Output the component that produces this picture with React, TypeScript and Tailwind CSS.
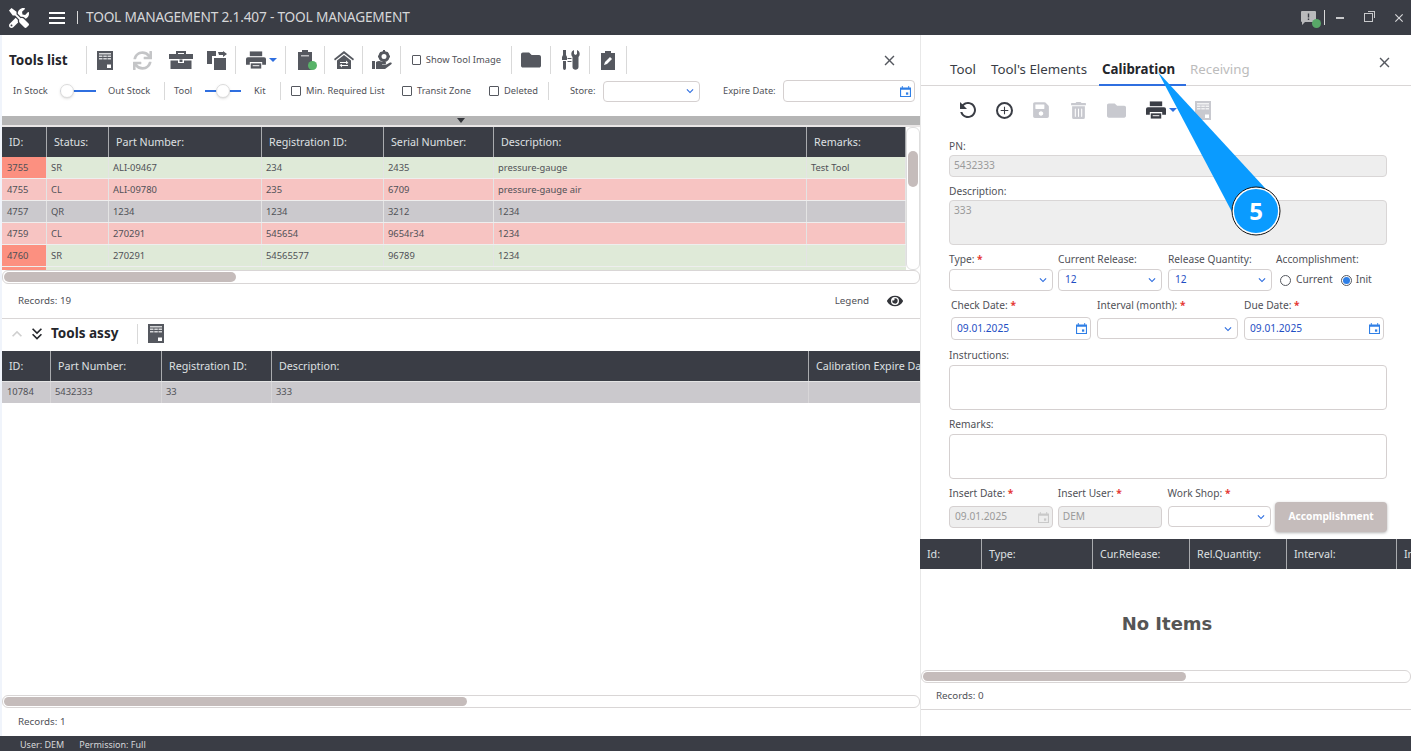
import React from 'react';
import { FaFolder, FaSave, FaSync, FaTools, FaTrashAlt, FaEye } from 'react-icons/fa';
import { MdAdd, MdClose, MdExpandMore, MdKeyboardArrowUp, MdKeyboardDoubleArrowDown, MdRefresh } from 'react-icons/md';

const Sep = ({ className = 'h-[28px]' }: { className?: string }) => <div className={`w-px bg-[#d9d9d9] shrink-0 ${className}`} />;

const ExcelIcon = ({ className = 'text-[#55585f]' }: { className?: string }) => (
    <svg viewBox="0 0 16 19" className={`w-[16px] h-[19px] ${className}`}>
        <rect width="16" height="19" fill="currentColor" />
        <path d="M2 2h12v1.500H2zM2 4.500h3.500V6H2zM6.300 4.500h3.500V6H6.300zM10.500 4.500H14V6h-3.500zM2 7h3.500v1.500H2zM6.300 7h3.500v1.500H6.300zM10.500 7H14v1.500h-3.500z" fill="#fff" opacity="0.75" />
        <path d="M10 13.500h4V17h-4z" fill="#fff" />
    </svg>
);

const Caret = () => <div className="w-0 h-0 border-x-[4px] border-x-transparent border-t-[4px] border-t-[#2f6fe0]" />;

const ToolboxIcon = () => (
    <svg viewBox="0 0 24 18" className="w-[24px] h-[18px] text-[#55585f]">
        <path d="M7 0h10v3h-2V2H9v1H7z" fill="currentColor" />
        <path d="M0 3h24v5H0zM1.500 9.500H9V12h6V9.500h7.500V18h-21z" fill="currentColor" />
        <rect x="10.500" y="8.500" width="3" height="2.500" fill="currentColor" />
    </svg>
);

const PrinterIcon = ({ className = 'text-[#55585f]' }: { className?: string }) => (
    <svg viewBox="0 0 21 18" className={`w-[20px] h-[18px] ${className}`}>
        <path d="M4 0h13v5H4z" fill="currentColor" />
        <path d="M2 6h17a2 2 0 0 1 2 2v6h-4v-3H4v3H0V8a2 2 0 0 1 2-2z" fill="currentColor" />
        <path d="M5 12.500h11V18H5z" fill="currentColor" />
        <path d="M7 14.500h7v1H7z" fill="#fff" />
    </svg>
);

const CopyIcon = () => (
    <svg viewBox="0 0 20 19" className="w-[20px] h-[19px] text-[#55585f]">
        <path d="M0 0h9v5H5v8H0z" fill="currentColor" />
        <path d="M7 7h12v12H7z" fill="currentColor" />
        <path d="M11 1h5V0l4 3-4 3V4h-4z" fill="currentColor" />
    </svg>
);

const ClipboardBadge = () => (
    <div className="relative w-[20px] h-[20px]">
        <svg viewBox="0 0 16 20" className="w-[16px] h-[20px] text-[#55585f]">
            <path d="M5 0h6v2h4v18H1V2h4z" fill="currentColor" />
            <path d="M4 5h8v1.500H4z" fill="#fff" opacity="0.6" />
        </svg>
        <div className="absolute right-0 bottom-0 w-[9px] h-[9px] rounded-full bg-[#58b368]" />
    </div>
);

const HomeIcon = () => (
    <svg viewBox="0 0 20 18" className="w-[20px] h-[18px] text-[#55585f]">
        <path d="M10 0 20 8l-1 1.500L10 2.500 1 9.500 0 8z" fill="currentColor" />
        <path d="M10 4l7 5.500V18H3V9.500z" fill="currentColor" />
        <path d="M6 11h6V9.500l2.500 2.500L12 13v-1H6zM14 15H8v1.500L5.500 14 8 13v1h6z" fill="#fff" />
    </svg>
);

const HandGearIcon = () => (
    <svg viewBox="0 0 20 20" className="w-[20px] h-[20px] text-[#55585f]">
        <circle cx="12" cy="6.500" r="4" fill="none" stroke="currentColor" strokeWidth="3" />
        <path d="M12 0v2M12 11v2M6 6.500h2M16 6.500h2M8 2.500l1.500 1.500M16 2.500 14.500 4" stroke="currentColor" strokeWidth="2" />
        <path d="M0 11h3v8H0zM4 12c2-1.500 4-1.500 6 0h3c1.500 0 1.500 2 0 2h-3v.5l4.500 0 3.500-2c1.500-.5 2.500 1 1 2L13 19H4z" fill="currentColor" />
    </svg>
);

const ToolSwapIcon = () => (
    <svg viewBox="0 0 20 20" className="w-[20px] h-[20px] text-[#55585f]">
        <path d="M2 0h3v5l1 2v3H1V7l1-2zM2 11h3v7c0 2.500-3 2.500-3 0z" fill="currentColor" />
        <path d="M13 0v4l1.500 1L16 4V0c3 1 3.500 5 1.500 7v10c0 3.500-6 3.500-6 0V7C9.500 5 10 1 13 0z" fill="currentColor" />
        <path d="M6.500 8.500h4M6.500 11.500h4" stroke="currentColor" strokeWidth="1" />
    </svg>
);

const ClipPenIcon = () => (
    <svg viewBox="0 0 14 19" className="w-[14px] h-[19px] text-[#55585f]">
        <path d="M4 0h6v2h4v17H0V2h4z" fill="currentColor" />
        <path d="M3 14l1-3 5-5 2 2-5 5z" fill="#fff" />
    </svg>
);

const BubbleIcon = () => (
    <svg viewBox="0 0 15 14" className="w-[15px] h-[14px]">
        <path d="M1 0h13a1 1 0 0 1 1 1v9a1 1 0 0 1-1 1H4l-3 3v-3a1 1 0 0 1-1-1V1a1 1 0 0 1 1-1z" fill="#b9babc" />
        <path d="M6.800 2.500h1.400v4H6.800zM6.800 7.500h1.400v1.500H6.800z" fill="#3a3d45" />
    </svg>
);

const CalendarIcon = ({ className = 'text-[#2f7fe6]' }: { className?: string }) => (
    <svg viewBox="0 0 12 12" className={`w-[11px] h-[11px] ${className}`}>
        <path d="M0 1.500h2V0h1v1.500h6V0h1v1.500h2V12H0zM1.200 4v6.800h9.600V4z" fill="currentColor" />
        <rect x="6.500" y="7" width="2.500" height="2.500" fill="currentColor" />
    </svg>
);

const Toggle = ({ knobClass }: { knobClass: string }) => (
    <div className="relative w-[36px] h-[14px] flex items-center">
        <div className="h-[2px] bg-[#2f6fe0] w-full" />
        <div className={`absolute top-0 w-[14px] h-[14px] rounded-full bg-white border border-[#dcdcdc] shadow-sm ${knobClass}`} />
    </div>
);

const Check = ({ label, className }: { label: string; className: string }) => (
    <div className={`flex items-center gap-[5px] ${className}`}>
        <div className="w-[10px] h-[10px] border border-[#55585f] rounded-[1px]" />
        <span>{label}</span>
    </div>
);

const Chevron = () => <MdExpandMore className="text-[#2f6fe0] text-[14px] shrink-0" />;

const Req = () => <span className="text-[#e53935] font-bold"> *</span>;

const Field = ({ label, req, className, children }: { label: string; req?: boolean; className: string; children: React.ReactNode }) => (
    <div className={`flex flex-col ${className}`}>
        <div className="h-[14px] leading-[14px] whitespace-nowrap">{label}{req && <Req />}</div>
        {children}
    </div>
);

const SelectBox = ({ value, className = 'h-[22px]' }: { value?: string; className?: string }) => (
    <div className={`flex items-center justify-between pl-[6px] pr-[2px] border border-[#d5d0d0] rounded-[4px] bg-white text-[#1f4fc4] ${className}`}>
        <span>{value}</span>
        <Chevron />
    </div>
);

const DateBox = ({ value }: { value: string }) => (
    <div className="flex items-center justify-between h-[23px] pl-[5px] pr-[3px] border border-[#d5d0d0] rounded-[4px] bg-white text-[#1f4fc4]">
        <span>{value}</span>
        <CalendarIcon />
    </div>
);

const toolCols = ['w-[45px]', 'w-[62px]', 'w-[153px]', 'w-[122px]', 'w-[110px]', 'w-[313px]', 'w-[99px]'];
const toolHeaders = ['ID:', 'Status:', 'Part Number:', 'Registration ID:', 'Serial Number:', 'Description:', 'Remarks:'];
const toolRows = [
    { bg: 'bg-[#dfead8]', idBg: 'bg-[#fc9080]', cells: ['3755', 'SR', 'ALI-09467', '234', '2435', 'pressure-gauge', 'Test Tool'] },
    { bg: 'bg-[#f7c4c2]', idBg: 'bg-[#f7c4c2]', cells: ['4755', 'CL', 'ALI-09780', '235', '6709', 'pressure-gauge air', ''] },
    { bg: 'bg-[#cbc9cd]', idBg: 'bg-[#cbc9cd]', cells: ['4757', 'QR', '1234', '1234', '3212', '1234', ''] },
    { bg: 'bg-[#f7c4c2]', idBg: 'bg-[#f7c4c2]', cells: ['4759', 'CL', '270291', '545654', '9654r34', '1234', ''] },
    { bg: 'bg-[#dfead8]', idBg: 'bg-[#fc9080]', cells: ['4760', 'SR', '270291', '54565577', '96789', '1234', ''] },
];

const assyCols = ['w-[49px]', 'w-[111px]', 'w-[110px]', 'w-[537px]', 'w-[120px]'];
const assyHeaders = ['ID:', 'Part Number:', 'Registration ID:', 'Description:', 'Calibration Expire Date:'];
const assyRow = ['10784', '5432333', '33', '333', ''];

const calCols = ['w-[62px]', 'w-[111px]', 'w-[97px]', 'w-[97px]', 'w-[110px]', 'w-[60px]'];
const calHeaders = ['Id:', 'Type:', 'Cur.Release:', 'Rel.Quantity:', 'Interval:', 'Insert:'];

const HeaderRow = ({ cols, headers, className = 'h-[30px]' }: { cols: string[]; headers: string[]; className?: string }) => (
    <div className={`flex bg-[#3a3d45] text-[#dfe0e2] text-[10.7px] ${className}`}>
        {headers.map((h, i) => (
            <div key={h} className={`${cols[i]} shrink-0 flex items-center pl-[7px] border-r border-[#a9abae] whitespace-nowrap overflow-hidden`}>{h}</div>
        ))}
    </div>
);

const ScrollTrack = ({ thumb, className = 'h-[13px]' }: { thumb: string; className?: string }) => (
    <div className={`border border-[#d9d6d6] rounded-[6px] bg-white p-px overflow-hidden shrink-0 ${className}`}>
        <div className={`h-full rounded-[5px] bg-[#c5bcbb] ${thumb}`} />
    </div>
);

const App: React.FC = () => {
    return (
        <div className="relative w-[1411px] h-[751px] overflow-hidden bg-white text-[10.2px] text-[#505157] font-['Noto_Sans','Open_Sans',sans-serif]">
            {/* title bar */}
            <div className="h-[35px] bg-[#3a3d45] flex items-center text-[#d6d7d9]">
                <FaTools className="ml-[9px] text-white text-[20px]" />
                <div className="ml-[20px] flex flex-col gap-[3px]">
                    <div className="w-[16px] h-[2px] bg-white" />
                    <div className="w-[16px] h-[2px] bg-white" />
                    <div className="w-[16px] h-[2px] bg-white" />
                </div>
                <Sep className="h-[13px] ml-[12px] bg-[#6b6e75]" />
                <span className="ml-[8px] text-[13.7px] tracking-[-0.2px]">TOOL MANAGEMENT 2.1.407 - TOOL MANAGEMENT</span>
                <div className="ml-auto flex items-center text-[#c8c9cb]">
                    <div className="relative w-[15px] h-[14px]">
                        <BubbleIcon />
                        <div className="absolute -right-[5px] -bottom-[3px] w-[9px] h-[9px] rounded-full bg-[#58a868]" />
                    </div>
                    <Sep className="h-[15px] ml-[8px] bg-[#5c5f66]" />
                    <div className="ml-[11px] w-[8px] h-[2px] bg-[#c8c9cb]" />
                    <div className="ml-[20px] relative w-[9px] h-[9px] border border-[#c8c9cb]">
                        <div className="absolute -top-[3px] -right-[3px] w-[7px] h-[7px] border-t border-r border-[#c8c9cb]" />
                    </div>
                    <MdClose className="ml-[19px] mr-[5px] text-[14px] text-[#d6d7d9]" />
                </div>
            </div>

            <div className="flex h-[701px]">
                {/* left panel */}
                <div className="w-[920px] shrink-0 flex flex-col pl-[2px] bg-[#f0f4fb]">
                    <div className="flex-1 flex flex-col bg-white min-h-0">
                        <div className="h-[81px] flex flex-col">
                            <div className="h-[43px] pt-[7px] flex items-center pl-[7px]">
                                <span className="w-[77px] font-bold text-[13.5px] text-[#24262b]">Tools list</span>
                                <Sep />
                                <div className="ml-[10px]"><ExcelIcon /></div>
                                <FaSync className="ml-[20px] text-[19px] text-[#c4c5c7]" />
                                <div className="ml-[17px]"><ToolboxIcon /></div>
                                <div className="ml-[14px]"><CopyIcon /></div>
                                <Sep className="h-[28px] ml-[8px]" />
                                <div className="ml-[10px]"><PrinterIcon /></div>
                                <div className="ml-[3px]"><Caret /></div>
                                <Sep className="h-[28px] ml-[8px]" />
                                <div className="ml-[11px]"><ClipboardBadge /></div>
                                <Sep className="h-[28px] ml-[7px]" />
                                <div className="ml-[9px]"><HomeIcon /></div>
                                <Sep className="h-[28px] ml-[8px]" />
                                <div className="ml-[9px]"><HandGearIcon /></div>
                                <Sep className="h-[28px] ml-[8px]" />
                                <Check label="Show Tool Image" className="ml-[11px] w-[89px] whitespace-nowrap text-[9.4px]" />
                                <Sep className="h-[28px] ml-[10px]" />
                                <FaFolder className="ml-[9px] text-[20px] text-[#55585f]" />
                                <Sep className="h-[28px] ml-[9px]" />
                                <div className="ml-[10px]"><ToolSwapIcon /></div>
                                <Sep className="h-[28px] ml-[8px]" />
                                <div className="ml-[11px]"><ClipPenIcon /></div>
                                <Sep className="h-[28px] ml-[11px]" />
                                <MdClose className="ml-[254px] text-[17px] text-[#55585f]" />
                            </div>
                            <div className="h-[26px] flex items-center pl-[11px] whitespace-nowrap text-[9.3px]">
                                <span className="w-[47px]">In Stock</span>
                                <Toggle knobClass="left-0" />
                                <span className="ml-[12px] w-[56px]">Out Stock</span>
                                <Sep className="h-[18px]" />
                                <span className="ml-[9px] w-[31px]">Tool</span>
                                <Toggle knobClass="left-[11px]" />
                                <span className="ml-[13px] w-[26px]">Kit</span>
                                <Sep className="h-[18px]" />
                                <Check label="Min. Required List" className="ml-[10px] w-[111px]" />
                                <Check label="Transit Zone" className="w-[87px]" />
                                <Check label="Deleted" className="w-[59px]" />
                                <Sep className="h-[18px]" />
                                <span className="ml-[21px] w-[33px]">Store:</span>
                                <SelectBox className="w-[97px] h-[21px]" />
                                <span className="ml-[23px] w-[60px]">Expire Date:</span>
                                <div className="w-[132px] h-[22px] border border-[#d5d0d0] rounded-[4px] flex items-center justify-end pr-[3px]">
                                    <CalendarIcon />
                                </div>
                            </div>
                        </div>

                        {/* splitter */}
                        <div className="h-[9px] bg-[#b5b5b5] flex items-center justify-center">
                            <div className="w-0 h-0 border-x-[4px] border-x-transparent border-t-[5px] border-t-[#33353a]" />
                        </div>
                        <div className="h-[2px] bg-[#e9e6e6]" />

                        {/* tools table */}
                        <div className="flex h-[143px] overflow-hidden">
                            <div className="w-[904px] shrink-0">
                                <HeaderRow cols={toolCols} headers={toolHeaders} />
                                {toolRows.map((row) => (
                                    <div key={row.cells[0]} className={`flex h-[22px] text-[9.4px] ${row.bg} border-b border-[#eeeeee]`}>
                                        {row.cells.map((c, i) => (
                                            <div key={i} className={`${toolCols[i]} shrink-0 flex items-center pt-[1px] border-r border-[#e4e4e4] ${i === 0 ? `pl-[5px] ${row.idBg}` : 'pl-[4px]'}`}>{c}</div>
                                        ))}
                                    </div>
                                ))}
                                <div className="flex h-[3px] bg-[#dfead8]"><div className="w-[44px] bg-[#fc9080]" /></div>
                            </div>
                            <div className="flex-1 border border-[#dedede] rounded-[6px] bg-white pt-[23px] px-px">
                                <div className="h-[36px] rounded-[6px] bg-[#c5bcbb]" />
                            </div>
                        </div>
                        <ScrollTrack thumb="w-[232px]" className="h-[14px]" />

                        <div className="h-[35px] flex items-center justify-between pl-[16px] pr-[17px] border-b border-[#d9d6d6] text-[9.8px]">
                            <span>Records: 19</span>
                            <div className="flex items-center gap-[18px]">
                                <span>Legend</span>
                                <FaEye className="text-[16px] text-[#33353a]" />
                            </div>
                        </div>

                        <div className="h-[32px] flex items-center pl-[5px] pb-[3px]">
                            <MdKeyboardArrowUp className="text-[20px] text-[#cfcfcf]" />
                            <MdKeyboardDoubleArrowDown className="text-[20px] text-[#24262b]" />
                            <span className="ml-[4px] w-[86px] font-bold text-[13.5px] text-[#24262b]">Tools assy</span>
                            <Sep className="h-[20px]" />
                            <div className="ml-[10px]"><ExcelIcon /></div>
                        </div>

                        {/* tools assy table */}
                        <div className="overflow-hidden">
                            <HeaderRow cols={assyCols} headers={assyHeaders} />
                            <div className="flex h-[22px] bg-[#cbc9cd] border-t border-[#e4e4e4] text-[9.4px]">
                                {assyRow.map((c, i) => (
                                    <div key={i} className={`${assyCols[i]} shrink-0 flex items-center border-r border-[#d8d6d8] ${i === 0 ? 'pl-[5px]' : 'pl-[4px]'}`}>{c}</div>
                                ))}
                            </div>
                        </div>
                        <div className="flex-1" />
                        <ScrollTrack thumb="w-[463px]" />
                        <div className="h-[28px] flex items-center pl-[16px] pt-[1px] text-[9.8px]">Records: 1</div>
                    </div>
                </div>

                {/* right panel */}
                <div className="flex-1 min-w-0 flex flex-col border-l border-[#e8e8e8]">
                    <div className="h-[51px] flex items-end relative border-b border-[#d9d6d6] text-[13.3px] pl-[29px] whitespace-nowrap shrink-0">
                        <div className="h-[34px] pt-[9px] w-[41px] text-[#3a3d45]">Tool</div>
                        <div className="h-[34px] pt-[9px] w-[108px] text-[#3a3d45]">Tool's Elements</div>
                        <div className="h-[35px] pt-[9px] w-[87px] pl-[3px] font-bold text-[#24262b] border-b-2 border-[#2f6fe0] -mb-px">Calibration</div>
                        <div className="h-[34px] pt-[9px] ml-[4px] text-[#bcbcbc]">Receiving</div>
                        <MdClose className="ml-auto mr-[18px] mb-[14px] text-[17px] text-[#55585f]" />
                    </div>

                    <div className="h-[50px] flex items-center pl-[35px] pb-[2px] shrink-0">
                        <MdRefresh className="text-[24px] text-[#3a3d45] -scale-x-100" />
                        <div className="ml-[16px] w-[17px] h-[17px] rounded-full border-2 border-[#3a3d45] flex items-center justify-center">
                            <MdAdd className="text-[13px] text-[#3a3d45]" />
                        </div>
                        <FaSave className="ml-[19px] text-[18px] text-[#c8c9cf]" />
                        <FaTrashAlt className="ml-[20px] text-[17px] text-[#c8c9cf]" />
                        <FaFolder className="ml-[20px] text-[19px] text-[#c8c9cf]" />
                        <div className="ml-[20px]"><PrinterIcon className="text-[#3a3d45]" /></div>
                        <div className="ml-[3px]"><Caret /></div>
                        <div className="ml-[18px]"><ExcelIcon className="text-[#c8c9cf]" /></div>
                    </div>

                    <div className="pl-[28px] pr-[24px] flex flex-col shrink-0">
                        <Field label="PN:" className="h-[45px] pt-[3px]">
                            <div className="mt-[2px] h-[22px] border border-[#d9d6d6] rounded-[4px] bg-[#eeeeee] flex items-center pl-[4px] text-[#9a9a9a]">5432333</div>
                        </Field>
                        <Field label="Description:" className="h-[67px] pt-[3px]">
                            <div className="mt-[2px] h-[45px] border border-[#d9d6d6] rounded-[4px] bg-[#eeeeee] pl-[4px] pt-[2px] text-[#9a9a9a]">333</div>
                        </Field>
                        <div className="flex mt-[4px] h-[46px]">
                            <Field label="Type:" req className="w-[104px]"><SelectBox className="h-[22px] mt-[3px]" /></Field>
                            <Field label="Current Release:" className="w-[104px] ml-[5px]"><SelectBox value="12" className="h-[22px] mt-[3px]" /></Field>
                            <Field label="Release Quantity:" className="w-[104px] ml-[6px]"><SelectBox value="12" className="h-[22px] mt-[3px]" /></Field>
                            <Field label="Accomplishment:" className="ml-[4px]">
                                <div className="flex items-center h-[22px] mt-[3px] pl-[4px]">
                                    <div className="w-[11px] h-[11px] rounded-full border border-[#55585f]" />
                                    <span className="ml-[5px]">Current</span>
                                    <div className="ml-[8px] w-[11px] h-[11px] rounded-full border border-[#55585f] flex items-center justify-center">
                                        <div className="w-[7px] h-[7px] rounded-full bg-[#2f7fe6]" />
                                    </div>
                                    <span className="ml-[4px]">Init</span>
                                </div>
                            </Field>
                        </div>
                        <div className="flex h-[49px] pl-[2px]">
                            <Field label="Check Date:" req className="w-[140px]"><div className="mt-[5px]"><DateBox value="09.01.2025" /></div></Field>
                            <Field label="Interval (month):" req className="w-[141px] ml-[6px]"><SelectBox className="h-[21px] mt-[6px]" /></Field>
                            <Field label="Due Date:" req className="w-[140px] ml-[6px]"><div className="mt-[5px]"><DateBox value="09.01.2025" /></div></Field>
                        </div>
                        <Field label="Instructions:" className="h-[69px] pt-[1px]">
                            <div className="mt-[3px] h-[45px] border border-[#d5d0d0] rounded-[4px]" />
                        </Field>
                        <Field label="Remarks:" className="h-[69px] pt-[1px]">
                            <div className="mt-[3px] h-[45px] border border-[#d5d0d0] rounded-[4px]" />
                        </Field>
                        <div className="flex h-[54px] pt-[1px]">
                            <Field label="Insert Date:" req className="w-[104px]">
                                <div className="mt-[6px] h-[22px] border border-[#d5d0d0] rounded-[4px] bg-[#eeeeee] flex items-center justify-between pl-[5px] pr-[3px] text-[#9a9a9a]">
                                    <span>09.01.2025</span>
                                    <CalendarIcon className="text-[#c9c9c9]" />
                                </div>
                            </Field>
                            <Field label="Insert User:" req className="w-[104px] ml-[5px]">
                                <div className="mt-[6px] h-[22px] border border-[#d5d0d0] rounded-[4px] bg-[#eeeeee] flex items-center pl-[4px] text-[#9a9a9a]">DEM</div>
                            </Field>
                            <Field label="Work Shop:" req className="w-[104px] ml-[6px]"><SelectBox className="h-[21px] mt-[6px]" /></Field>
                            <div className="ml-[4px] mt-[16px] w-[112px] h-[30px] rounded-[4px] bg-[#c5bcbb] shadow-[0_1px_3px_rgba(0,0,0,0.3)] flex items-center justify-center text-white font-bold">Accomplishment</div>
                        </div>
                    </div>

                    <div className="overflow-hidden shrink-0 -ml-px">
                        <HeaderRow cols={calCols} headers={calHeaders} className="h-[30px]" />
                    </div>
                    <div className="flex-1 flex items-center justify-center font-['DejaVu_Sans',sans-serif] font-bold text-[18px] text-[#555555] pt-[8px] pl-[2px]">No Items</div>
                    <ScrollTrack thumb="w-[263px]" />
                    <div className="h-[27px] flex items-center pl-[15px] border-b border-[#d9d6d6] shrink-0 text-[9.8px]">Records: 0</div>
                    <div className="h-[26px] shrink-0" />
                </div>
            </div>

            {/* status bar */}
            <div className="h-[15px] bg-[#3a3d45] flex items-center pl-[20px] pt-[3px] gap-[15px] text-[9px] text-[#d6d7d9]">
                <span>User: DEM</span>
                <span>Permission: Full</span>
            </div>

            {/* numbered callout */}
            <svg className="absolute left-[1150px] top-[60px] w-[140px] h-[180px]" viewBox="0 0 140 180">
                <polygon points="8,12 82,152 115,128" fill="#0a9bff" />
                <circle cx="106" cy="151" r="23" fill="#0a9bff" stroke="#ffffff" strokeWidth="2" />
                <circle cx="106" cy="151" r="24" fill="none" stroke="#111111" strokeWidth="1" />
            </svg>
            <div className="absolute left-[1233px] top-[194px] w-[46px] text-center text-white font-bold text-[24px] leading-[34px]">5</div>
        </div>
    );
};

export default App;
